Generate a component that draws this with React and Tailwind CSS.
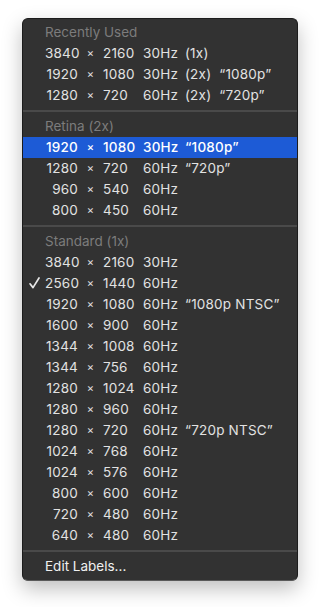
import React from 'react'

const sections = [
  {
    title: 'Recently Used',
    rows: [
      { w: '3840', h: '2160', hz: '30Hz', tags: ['(1x)'] },
      { w: '1920', h: '1080', hz: '30Hz', tags: ['(2x)', '“1080p”'] },
      { w: '1280', h: '720', hz: '60Hz', tags: ['(2x)', '“720p”'] },
    ],
  },
  {
    title: 'Retina (2x)',
    rows: [
      { w: '1920', h: '1080', hz: '30Hz', tags: ['“1080p”'], active: true },
      { w: '1280', h: '720', hz: '60Hz', tags: ['“720p”'] },
      { w: '960', h: '540', hz: '60Hz' },
      { w: '800', h: '450', hz: '60Hz' },
    ],
  },
  {
    title: 'Standard (1x)',
    rows: [
      { w: '3840', h: '2160', hz: '30Hz' },
      { w: '2560', h: '1440', hz: '60Hz', checked: true },
      { w: '1920', h: '1080', hz: '60Hz', tags: ['“1080p NTSC”'] },
      { w: '1600', h: '900', hz: '60Hz' },
      { w: '1344', h: '1008', hz: '60Hz' },
      { w: '1344', h: '756', hz: '60Hz' },
      { w: '1280', h: '1024', hz: '60Hz' },
      { w: '1280', h: '960', hz: '60Hz' },
      { w: '1280', h: '720', hz: '60Hz', tags: ['“720p NTSC”'] },
      { w: '1024', h: '768', hz: '60Hz' },
      { w: '1024', h: '576', hz: '60Hz' },
      { w: '800', h: '600', hz: '60Hz' },
      { w: '720', h: '480', hz: '60Hz' },
      { w: '640', h: '480', hz: '60Hz' },
    ],
  },
]

const Check = () => (
  <svg width="11" height="12" viewBox="0 0 11 12" className="absolute left-[6px] top-[4px]">
    <path d="M1 6.8 L4 10.6 L10 1" fill="none" stroke="#e6e6e6" strokeWidth="1.7" strokeLinecap="round" strokeLinejoin="round" />
  </svg>
)

const Row = ({ row }) => (
  <div
    className={`relative flex items-center h-[21px] pl-[22px] tracking-[0.2px] ${
      row.active ? 'bg-[#1d5bd6] text-white font-medium' : 'text-[#e2e2e2]'
    }`}
  >
    {row.checked && <Check />}
    <span className="w-[33px] text-right">{row.w}</span>
    <span className="w-[25px] text-center text-[11px]">×</span>
    <span className="w-[40px]">{row.h}</span>
    <span className="w-[42px]">{row.hz}</span>
    {row.tags && (
      <div className="flex gap-[8px]">
        {row.tags.map((t) => (
          <span key={t}>{t}</span>
        ))}
      </div>
    )}
  </div>
)

const Separator = () => (
  <div className="h-[10px] flex items-center">
    <div className="h-[2px] w-full bg-[#4a4a4a]" />
  </div>
)

export default function App() {
  return (
    <div className="w-[321px] h-[607px] bg-white pt-[18px] pl-[22px]" style={{ fontFamily: 'Inter, "Noto Sans", sans-serif' }}>
      <div className="w-[276px] rounded-[6px] bg-[#323232] border border-[#1c1c1c] border-b-[#5a5a5a] py-[3px] text-[13.5px] shadow-[0_8px_20px_rgba(0,0,0,0.25)]">
        {sections.map((s) => (
          <div key={s.title}>
            <div className="h-[21px] flex items-center pl-[22px] text-[#7c7c7c]">{s.title}</div>
            {s.rows.map((r, i) => (
              <Row key={i} row={r} />
            ))}
            <Separator />
          </div>
        ))}
        <div className="h-[21px] flex items-center pl-[22px] text-[#f0f0f0]">Edit Labels...</div>
      </div>
    </div>
  )
}
